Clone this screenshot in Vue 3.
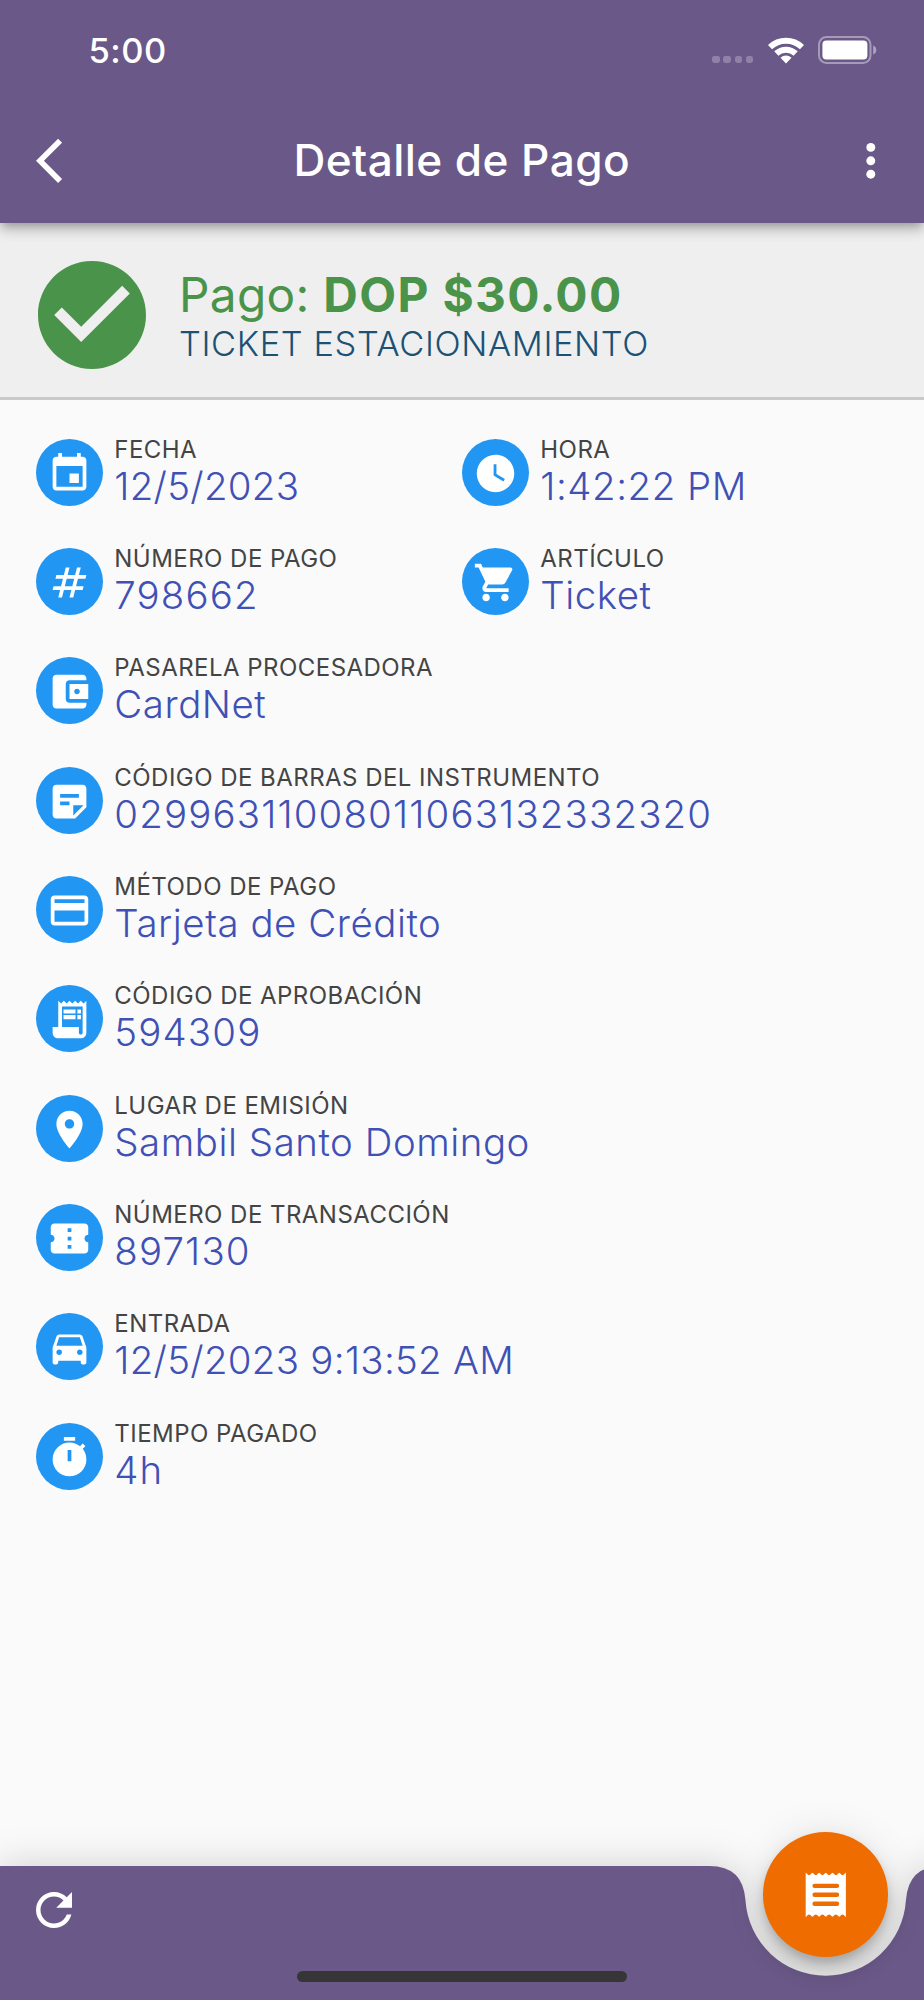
<script setup>
const icons = {
  event: 'M17 12h-5v5h5v-5zM16 1v2H8V1H6v2H5c-1.11 0-1.99.9-1.99 2L3 19c0 1.1.89 2 2 2h14c1.1 0 2-.9 2-2V5c0-1.1-.9-2-2-2h-1V1h-2zm3 18H5V8h14v11z',
  clock: 'M12 2C6.5 2 2 6.5 2 12s4.5 10 10 10 10-4.5 10-10S17.5 2 12 2zm4.2 14.2L11 13V7h1.5v5.2l4.5 2.7-.8 1.3z',
  number: 'M20.5 10L21 8h-4l1-4h-2l-1 4h-4l1-4h-2L9 8H5l-.5 2h4l-1 4h-4L3 16h4l-1 4h2l1-4h4l-1 4h2l1-4h4l.5-2h-4l1-4h4zm-7 4h-4l1-4h4l-1 4z',
  cart: 'M7 18c-1.1 0-1.99.9-1.99 2S5.9 22 7 22s2-.9 2-2-.9-2-2-2zM1 2v2h2l3.6 7.59-1.35 2.45c-.16.28-.25.61-.25.96 0 1.1.9 2 2 2h12v-2H7.42c-.14 0-.25-.11-.25-.25l.03-.12.9-1.63h7.45c.75 0 1.41-.41 1.75-1.03l3.58-6.49c.08-.14.12-.31.12-.48 0-.55-.45-1-1-1H5.21l-.94-2H1zm16 16c-1.1 0-1.99.9-1.99 2s.89 2 1.99 2 2-.9 2-2-.9-2-2-2z',
  wallet: 'M21 18v1c0 1.1-.9 2-2 2H5c-1.11 0-2-.9-2-2V5c0-1.1.89-2 2-2h14c1.1 0 2 .9 2 2v1h-9c-1.11 0-2 .9-2 2v8c0 1.1.89 2 2 2h9zm-9-2h10V8H12v8zm4-2.5c-.83 0-1.5-.67-1.5-1.5s.67-1.5 1.5-1.5 1.5.67 1.5 1.5-.67 1.5-1.5 1.5z',
  note: 'M19 3H5c-1.1 0-2 .9-2 2v14c0 1.1.9 2 2 2h10l6-6V5c0-1.1-.9-2-2-2zM7 8h10v2H7V8zm5 6H7v-2h5v2zm2 5.5V14h5.5L14 19.5z',
  card: 'M20 4H4c-1.11 0-1.99.89-1.99 2L2 18c0 1.11.89 2 2 2h16c1.11 0 2-.89 2-2V6c0-1.11-.89-2-2-2zm0 14H4v-6h16v6zm0-10H4V6h16v2z',
  receiptLong: 'M19.5 3.5L18 2l-1.5 1.5L15 2l-1.5 1.5L12 2l-1.5 1.5L9 2 7.5 3.5 6 2v14H3v3c0 1.66 1.34 3 3 3h12c1.66 0 3-1.34 3-3V2l-1.5 1.5zM19 19c0 .55-.45 1-1 1s-1-.45-1-1v-3H8V5h11v14zM8.8 6.6h6.4v2.2H8.8zM16.2 6.6h1.9v2.2h-1.9zM8.8 9.6h6.4v2.2H8.8zM16.2 9.6h1.9v2.2h-1.9z',
  place: 'M12 2C8.13 2 5 5.13 5 9c0 5.25 7 13 7 13s7-7.75 7-13c0-3.87-3.13-7-7-7zm0 9.5c-1.38 0-2.5-1.12-2.5-2.5s1.12-2.5 2.5-2.5 2.5 1.12 2.5 2.5-1.12 2.5-2.5 2.5z',
  ticket: 'M22 10V6c0-1.11-.9-2-2-2H4c-1.1 0-1.99.89-1.99 2v4c1.1 0 1.99.9 1.99 2s-.89 2-2 2v4c0 1.1.9 2 2 2h16c1.1 0 2-.9 2-2v-4c-1.1 0-2-.9-2-2s.9-2 2-2zm-9 7.5h-2v-2h2v2zm0-4.5h-2v-2h2v2zm0-4.5h-2v-2h2v2z',
  car: 'M18.92 6.01C18.72 5.42 18.16 5 17.5 5h-11c-.66 0-1.21.42-1.42 1.01L3 12v8c0 .55.45 1 1 1h1c.55 0 1-.45 1-1v-1h12v1c0 .55.45 1 1 1h1c.55 0 1-.45 1-1v-8l-2.08-5.99zM6.5 16c-.83 0-1.5-.67-1.5-1.5S5.67 13 6.5 13s1.5.67 1.5 1.5S7.33 16 6.5 16zm11 0c-.83 0-1.5-.67-1.5-1.5s.67-1.5 1.5-1.5 1.5.67 1.5 1.5-.67 1.5-1.5 1.5zM5 11l1.5-4.5h11L19 11H5z',
  timer: 'M15 1H9v2h6V1zm4.03 6.39l1.42-1.42c-.43-.51-.9-.99-1.41-1.41l-1.42 1.42C16.07 4.74 14.12 4 12 4c-4.97 0-9 4.03-9 9s4.02 9 9 9 9-4.03 9-9c0-2.12-.74-4.07-1.97-5.61zM13 14h-2V8h2v6z',
}

const details = [
  { icon: 'event', label: 'FECHA', value: '12/5/2023', kind: 'date' },
  { icon: 'clock', label: 'HORA', value: '1:42:22 PM' },
  { icon: 'number', label: 'NÚMERO DE PAGO', value: '798662', kind: 'digits' },
  { icon: 'cart', label: 'ARTÍCULO', value: 'Ticket' },
  { icon: 'wallet', label: 'PASARELA PROCESADORA', value: 'CardNet', wide: true },
  { icon: 'note', label: 'CÓDIGO DE BARRAS DEL INSTRUMENTO', value: '02996311008011063132332320', kind: 'digits', wide: true },
  { icon: 'card', label: 'MÉTODO DE PAGO', value: 'Tarjeta de Crédito', wide: true },
  { icon: 'receiptLong', label: 'CÓDIGO DE APROBACIÓN', value: '594309', kind: 'digits', wide: true },
  { icon: 'place', label: 'LUGAR DE EMISIÓN', value: 'Sambil Santo Domingo', wide: true },
  { icon: 'ticket', label: 'NÚMERO DE TRANSACCIÓN', value: '897130', kind: 'digits', wide: true },
  { icon: 'car', label: 'ENTRADA', value: '12/5/2023 9:13:52 AM', kind: 'date', wide: true },
  { icon: 'timer', label: 'TIEMPO PAGADO', value: '4h', kind: 'digits', wide: true },
]
</script>

<template>
  <div class="screen">
    <header class="app-bar">
      <div class="status">
        <span class="time">5:00</span>
        <div class="indicators">
          <span class="cell"><i></i><i></i><i></i><i></i></span>
          <svg class="wifi" viewBox="0 0 36 27">
            <path d="M2 10.2A23.1 23.1 0 0 1 34 10.2" />
            <path d="M8.3 16.5A14.1 14.1 0 0 1 27.7 16.5" />
            <path class="dot" d="M12.5 20.8A8 8 0 0 1 23.5 20.8L18 26.4z" />
          </svg>
          <svg class="battery" viewBox="0 0 60 28">
            <rect class="shell" x="1" y="1" width="51.5" height="26" rx="7.5" />
            <rect class="charge" x="4.4" y="4.6" width="45" height="19" rx="4" />
            <path class="nub" d="M55.2 9.6c4.2 1.4 4.2 7.6 0 9z" />
          </svg>
        </div>
      </div>
      <div class="toolbar">
        <svg class="back" viewBox="0 0 24 24"><path d="M11.67 3.87L9.9 2.1 0 12l9.9 9.9 1.77-1.77L3.54 12z" /></svg>
        <h1>Detalle de Pago</h1>
        <svg class="more" viewBox="0 0 24 24"><circle cx="12" cy="6" r="2" /><circle cx="12" cy="12" r="2" /><circle cx="12" cy="18" r="2" /></svg>
      </div>
    </header>

    <section class="summary">
      <svg class="check" viewBox="2 2 20 20"><path d="M12 2C6.48 2 2 6.48 2 12s4.48 10 10 10 10-4.48 10-10S17.52 2 12 2zm-2 15l-5-5 1.41-1.41L10 14.17l7.59-7.59L19 8l-9 9z" /></svg>
      <div class="summary-text">
        <p class="amount">Pago: <b>DOP $30.00</b></p>
        <p class="concept">TICKET ESTACIONAMIENTO</p>
      </div>
    </section>

    <main class="details">
      <div v-for="item in details" :key="item.label" class="detail" :class="{ wide: item.wide }">
        <span class="badge"><svg viewBox="0 0 24 24"><path :d="icons[item.icon]" /></svg></span>
        <div>
          <p class="label">{{ item.label }}</p>
          <p class="value" :class="item.kind">{{ item.value }}</p>
        </div>
      </div>
    </main>

    <footer class="bottom">
      <svg class="bar-shape" viewBox="0 0 924 134">
        <path d="M0 0H709.6Q743.1 0 745.5 34.4A80.36 80.36 0 0 0 905.9 34.4Q908.3 0 941.8 0H960V134H0z" />
      </svg>
      <svg class="refresh" viewBox="0 0 24 24"><path d="M17.65 6.35C16.2 4.9 14.21 4 12 4c-4.42 0-7.99 3.58-7.99 8s3.57 8 7.99 8c3.73 0 6.84-2.55 7.73-6h-2.08c-.82 2.33-3.04 4-5.65 4-3.31 0-6-2.69-6-6s2.69-6 6-6c1.66 0 3.14.69 4.22 1.78L13 11h7V4l-2.35 2.35z" /></svg>
      <span class="home"></span>
      <button class="fab" type="button">
        <svg viewBox="0 0 24 24">
          <path d="M3 2l.91.91c.33.33.85.33 1.18 0l.56-.56q.35-.35.7 0l.56.56c.33.33.85.33 1.18 0l.56-.56q.35-.35.7 0l.56.56c.33.33.85.33 1.18 0l.56-.56q.35-.35.7 0l.56.56c.33.33.85.33 1.18 0l.56-.56q.35-.35.7 0l.56.56c.33.33.85.33 1.18 0l.56-.56q.35-.35.7 0l.56.56c.33.33.85.33 1.18 0L21 2V22l-.91-.91c-.33-.33-.85-.33-1.18 0l-.56.56q-.35.35-.7 0l-.56-.56c-.33-.33-.85-.33-1.18 0l-.56.56q-.35.35-.7 0l-.56-.56c-.33-.33-.85-.33-1.18 0l-.56.56q-.35.35-.7 0l-.56-.56c-.33-.33-.85-.33-1.18 0l-.56.56q-.35.35-.7 0l-.56-.56c-.33-.33-.85-.33-1.18 0l-.56.56q-.35.35-.7 0l-.56-.56c-.33-.33-.85-.33-1.18 0L3 22z" />
          <path class="lines" d="M7 8H17M7 12H17M7 16H17" />
        </svg>
      </button>
    </footer>
  </div>
</template>

<style>
body { margin: 0; background: #fafafa; }
</style>

<style scoped>
.screen {
  width: 924px;
  height: 2000px;
  display: flex;
  flex-direction: column;
  overflow: hidden;
  background: #fafafa;
  font-family: Inter, Roboto, "Liberation Sans", sans-serif;
}
svg { display: block; fill: #fff; }
p, h1 { margin: 0; white-space: nowrap; }

.app-bar {
  position: relative;
  z-index: 1;
  height: 223px;
  flex: none;
  background: #6a5888;
  color: #fff;
  box-shadow: 0 4px 9px -2px rgba(0, 0, 0, .26), 0 9px 11px rgba(0, 0, 0, .12), 0 2px 22px rgba(0, 0, 0, .06);
}
.status {
  height: 100px;
  box-sizing: border-box;
  padding: 0 46.3px 0 88.5px;
  display: flex;
  justify-content: space-between;
}
.time { margin-top: 31px; font-size: 34.5px; line-height: 40px; font-weight: 550; letter-spacing: .5px; }
.indicators { display: flex; align-items: flex-start; }
.cell { display: flex; gap: 3.7px; margin: 56px 14.5px 0 0; }
.cell i { width: 7.4px; height: 7.4px; border-radius: 2.4px; background: rgba(255, 255, 255, .25); }
.wifi { width: 36px; height: 27px; margin: 36.8px 14.2px 0 0; }
.wifi path { fill: none; stroke: #fff; stroke-width: 6; }
.wifi .dot { fill: #fff; stroke: none; }
.battery { width: 60px; height: 28px; margin-top: 36.2px; }
.battery .shell { fill: none; stroke: rgba(255, 255, 255, .4); stroke-width: 2; }
.battery .nub { fill: rgba(255, 255, 255, .45); }
.toolbar {
  height: 122px;
  display: grid;
  grid-template-columns: 200px 1fr 210px;
  align-items: center;
  padding: 0 26.5px 0 36px;
}
.back, .more { width: 53.6px; height: 53.6px; }
.more { justify-self: end; }
h1 { text-align: center; font-size: 44.2px; line-height: 60px; font-weight: 500; letter-spacing: .4px; padding-bottom: 2px; }

.summary {
  height: 177px;
  flex: none;
  box-sizing: border-box;
  border-bottom: 3px solid #c9c9c9;
  background: #efefef;
  display: flex;
  padding: 38px 0 0 37.5px;
}
.check { width: 108px; height: 108px; fill: #4a934a; }
.summary-text { margin-left: 33.5px; }
.amount { margin-top: 5px; font-size: 47.8px; line-height: 58px; color: #4a934a; letter-spacing: .3px; }
.amount b { font-weight: 700; letter-spacing: 1.35px; }
.concept { font-size: 34.4px; line-height: 40px; font-weight: 360; color: #1a5276; letter-spacing: .62px; }

.details {
  flex: 1;
  display: grid;
  grid-template-columns: 426px 1fr;
  grid-auto-rows: 109.36px;
  align-content: start;
  padding: 38.5px 0 0 35.8px;
}
.detail { display: flex; align-items: flex-start; gap: 11.5px; }
.wide { grid-column: 1 / -1; }
.badge {
  width: 67px;
  height: 67px;
  flex: none;
  border-radius: 50%;
  background: #2196f3;
  display: flex;
  align-items: center;
  justify-content: center;
}
.badge svg { width: 45px; height: 45px; margin-top: 2px; }
.label { font-size: 24px; line-height: 22px; font-weight: 425; color: #444; letter-spacing: .46px; }
.value { font-size: 38.4px; line-height: 51px; font-weight: 300; color: #3f51b5; letter-spacing: .55px; }
.date { letter-spacing: .3px; }
.digits { letter-spacing: 1.17px; }

.bottom { position: relative; height: 134px; flex: none; }
.bar-shape {
  width: 924px;
  height: 134px;
  overflow: visible;
  fill: #6a5888;
  filter: drop-shadow(0 -2px 18px rgba(0, 0, 0, .16));
}
.refresh { position: absolute; left: 26.5px; top: 17px; width: 54px; height: 54px; }
.home {
  position: absolute;
  left: 297px;
  bottom: 18px;
  width: 330px;
  height: 11px;
  border-radius: 6px;
  background: #363636;
}
.fab {
  position: absolute;
  left: 763.2px;
  top: -33.6px;
  width: 125px;
  height: 125px;
  padding: 0;
  border: 0;
  border-radius: 50%;
  background: #ef6c00;
  display: grid;
  place-items: center;
  box-shadow: 0 7px 11px -2px rgba(0, 0, 0, .2), 0 13px 22px rgba(0, 0, 0, .14), 0 2px 40px rgba(0, 0, 0, .1);
}
.fab svg { width: 53.6px; height: 53.6px; }
.fab .lines { fill: none; stroke: #ef6c00; stroke-width: 2; stroke-linecap: round; }
</style>
